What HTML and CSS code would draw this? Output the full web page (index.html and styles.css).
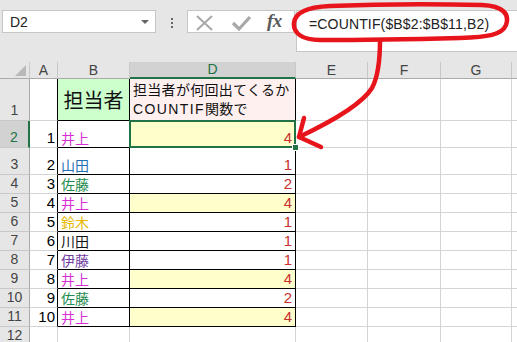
FILE: index.html
```html
<!DOCTYPE html>
<html lang="ja">
<head>
<meta charset="utf-8">
<title>COUNTIF</title>
<link rel="stylesheet" href="styles.css">
</head>
<body>
<div class="app">
  <div class="toolbar">
    <div class="namebox"><span>D2</span><span class="caret"></span></div>
    <div class="grip"><i></i><i></i><i></i></div>
    <div class="fxbox">
      <svg class="fxicons" width="106" height="21" viewBox="0 0 106 21">
        <path d="M9 5 L24 19 M24 5 L9 19" stroke="#a8a8a8" stroke-width="2" fill="none"/>
        <path d="M45 12 L51 18 L62 6" stroke="#a8a8a8" stroke-width="3.2" fill="none"/>
      </svg>
      <span class="fx">fx</span>
    </div>
    <div class="formula">=COUNTIF($B$2:$B$11,B2)</div>
  </div>

  <div class="sheet">
    <div class="c hd corner"><span class="tri"></span></div>
    <div class="c hd">A</div>
    <div class="c hd">B</div>
    <div class="c hd selcol">D</div>
    <div class="c hd">E</div>
    <div class="c hd">F</div>
    <div class="c hd">G</div>
    <div class="c hd"></div>

    <div class="c rh">1</div>
    <div class="c a br"></div>
    <div class="c b br bb title">担当者</div>
    <div class="c d br bb note"><div>担当者が何回出てくるか<br><span class="lat">COUNTIF</span>関数で</div></div>
    <div class="c"></div><div class="c"></div><div class="c"></div><div class="c"></div>

    <div class="c rh selrow">2</div>
    <div class="c a br">1</div>
    <div class="c b br bb n-inoue">井上</div>
    <div class="c d br bb hl active">4<span class="cursor"><span class="handle"></span></span></div>
    <div class="c"></div><div class="c"></div><div class="c"></div><div class="c"></div>

    <div class="c rh">3</div>
    <div class="c a br">2</div>
    <div class="c b br bb n-yamada">山田</div>
    <div class="c d br bb">1</div>
    <div class="c"></div><div class="c"></div><div class="c"></div><div class="c"></div>

    <div class="c rh">4</div>
    <div class="c a br">3</div>
    <div class="c b br bb n-sato">佐藤</div>
    <div class="c d br bb">2</div>
    <div class="c"></div><div class="c"></div><div class="c"></div><div class="c"></div>

    <div class="c rh">5</div>
    <div class="c a br">4</div>
    <div class="c b br bb n-inoue">井上</div>
    <div class="c d br bb hl">4</div>
    <div class="c"></div><div class="c"></div><div class="c"></div><div class="c"></div>

    <div class="c rh">6</div>
    <div class="c a br">5</div>
    <div class="c b br bb n-suzuki">鈴木</div>
    <div class="c d br bb">1</div>
    <div class="c"></div><div class="c"></div><div class="c"></div><div class="c"></div>

    <div class="c rh">7</div>
    <div class="c a br">6</div>
    <div class="c b br bb n-kawada">川田</div>
    <div class="c d br bb">1</div>
    <div class="c"></div><div class="c"></div><div class="c"></div><div class="c"></div>

    <div class="c rh">8</div>
    <div class="c a br">7</div>
    <div class="c b br bb n-ito">伊藤</div>
    <div class="c d br bb">1</div>
    <div class="c"></div><div class="c"></div><div class="c"></div><div class="c"></div>

    <div class="c rh">9</div>
    <div class="c a br">8</div>
    <div class="c b br bb n-inoue">井上</div>
    <div class="c d br bb hl">4</div>
    <div class="c"></div><div class="c"></div><div class="c"></div><div class="c"></div>

    <div class="c rh">10</div>
    <div class="c a br">9</div>
    <div class="c b br bb n-sato">佐藤</div>
    <div class="c d br bb">2</div>
    <div class="c"></div><div class="c"></div><div class="c"></div><div class="c"></div>

    <div class="c rh">11</div>
    <div class="c a br">10</div>
    <div class="c b br bb n-inoue">井上</div>
    <div class="c d br bb hl">4</div>
    <div class="c"></div><div class="c"></div><div class="c"></div><div class="c"></div>

    <div class="c rh">12</div>
    <div class="c a"></div>
    <div class="c b"></div>
    <div class="c d"></div>
    <div class="c"></div><div class="c"></div><div class="c"></div><div class="c"></div>
  </div>

  <svg class="ink" width="517" height="342" viewBox="0 0 517 342">
    <path d="M330 6 C380 4 440 4 482 5 C503 6 510 14 506 25 C502 35 488 37 460 38 C420 39 360 40 320 40 C302 40 293 33 294 23 C295 12 308 7 330 6 Z" fill="none" stroke="#e8141c" stroke-width="4.5" stroke-linecap="round" stroke-linejoin="round"/>
    <path d="M380 40 C380 58 379 75 372 88 C362 104 335 120 299 137" fill="none" stroke="#e8141c" stroke-width="4.5" stroke-linecap="round"/>
    <path d="M304 118 L299 137 L321 147" fill="none" stroke="#e8141c" stroke-width="4.5" stroke-linecap="round" stroke-linejoin="round"/>
  </svg>
</div>
</body>
</html>
```

FILE: styles.css
```css
* {
  box-sizing: border-box;
}

body {
  margin: 0;
  background: #e6e6e6;
  font-family: "Liberation Sans", "Noto Sans CJK JP", sans-serif;
  color: #000;
}

.app {
  position: relative;
  width: 517px;
  height: 342px;
  overflow: hidden;
}

/* ---------- formula bar ---------- */
.toolbar {
  height: 62px;
  display: flex;
  align-items: flex-start;
  padding: 10px 0 0 2px;
}

.namebox {
  width: 154px;
  height: 23px;
  background: #fff;
  border: 1px solid #c6c6c6;
  display: flex;
  align-items: center;
  justify-content: space-between;
  padding: 0 6px 0 7px;
  font-size: 14px;
  color: #222;
}

.caret {
  width: 0;
  height: 0;
  border-left: 4px solid transparent;
  border-right: 4px solid transparent;
  border-top: 4px solid #666;
}

.grip {
  width: 31px;
  display: flex;
  flex-direction: column;
  align-items: center;
  gap: 2px;
  padding-top: 8px;
}

.grip i {
  display: block;
  width: 2px;
  height: 2px;
  background: #666;
}

.fxbox {
  width: 108px;
  height: 23px;
  background: #fff;
  border: 1px solid #c6c6c6;
  position: relative;
  display: flex;
  align-items: center;
}

.fxicons {
  display: block;
}

.fx {
  position: absolute;
  left: 79px;
  top: -1px;
  font-family: "Liberation Serif", serif;
  font-style: italic;
  font-weight: bold;
  font-size: 19px;
  color: #5a5a5a;
  letter-spacing: -0.5px;
}

.formula {
  margin-left: 1px;
  flex: 1;
  height: 42px;
  background: #fff;
  border: 1px solid #c6c6c6;
  border-right: none;
  padding: 5px 0 0 12px;
  font-size: 14px;
  line-height: 17px;
  letter-spacing: 0.15px;
  color: #222;
}

/* ---------- sheet ---------- */
.sheet {
  display: grid;
  grid-template-columns: 30px 28px 72px 166px 72px 73px 71px 1fr;
  grid-template-rows: 17px 42px 27px 27px repeat(9, 19px);
  background: #fff;
}

.c {
  border-right: 1px solid #d4d4d4;
  border-bottom: 1px solid #d4d4d4;
  display: flex;
  align-items: flex-end;
  padding: 0 3px 1px;
  font-size: 15px;
  line-height: 17px;
  white-space: nowrap;
  overflow: hidden;
}

.hd {
  background: #e6e6e6;
  border-right-color: #c8c8c8;
  border-bottom-color: #ababab;
  justify-content: center;
  align-items: center;
  padding: 0;
  font-size: 14px;
  color: #444;
}

.corner {
  position: relative;
}

.tri {
  position: absolute;
  right: 3px;
  bottom: 2px;
  width: 0;
  height: 0;
  border-left: 11px solid transparent;
  border-bottom: 11px solid #b9b9b9;
}

.selcol {
  background: #d2d2d2;
  color: #217346;
  border-bottom: 2px solid #217346;
}

.rh {
  background: #e6e6e6;
  border-right-color: #ababab;
  border-bottom-color: #c8c8c8;
  justify-content: center;
  padding: 0 0 1px;
  font-size: 14px;
  color: #444;
}

.selrow {
  background: #d2d2d2;
  color: #217346;
  border-right: 2px solid #217346;
}

.a {
  justify-content: flex-end;
  padding-right: 2px;
}

.b {
  font-family: "Noto Sans CJK JP", sans-serif;
  font-size: 14px;
  line-height: 17px;
  padding-left: 3px;
  padding-bottom: 0;
}

.d {
  justify-content: flex-end;
  color: #c8302c;
}

.br {
  border-right-color: #000;
}

.bb {
  border-bottom-color: #000;
}

.title {
  background: #ccffcc;
  font-size: 20px;
  line-height: 24px;
  align-items: center;
  justify-content: center;
  color: #111;
}

.note {
  background: #fff0f0;
  white-space: nowrap;
  justify-content: flex-start;
  font-family: "Noto Sans CJK JP", sans-serif;
  font-size: 14px;
  line-height: 19px;
  letter-spacing: 0.3px;
  color: #111;
  padding: 0 2px 1px 3px;
}

.lat {
  font-family: "Liberation Sans", sans-serif;
  letter-spacing: 1.4px;
}

.hl {
  background: #ffffcc;
}

.active {
  position: relative;
  overflow: visible;
  z-index: 2;
}

.cursor {
  position: absolute;
  left: -1px;
  top: -1px;
  right: -1px;
  bottom: -1px;
  border: 2px solid #217346;
}

.handle {
  position: absolute;
  right: -5px;
  bottom: -5px;
  width: 7px;
  height: 7px;
  background: #217346;
  border: 1px solid #fff;
}

.n-inoue { color: #d62fd6; }
.n-yamada { color: #1f6fb5; }
.n-sato { color: #1e8c4e; }
.n-suzuki { color: #e6b800; }
.n-kawada { color: #111; }
.n-ito { color: #7040a0; }

/* ---------- annotation ---------- */
.ink {
  position: absolute;
  left: 0;
  top: 0;
  pointer-events: none;
  z-index: 10;
}
```
